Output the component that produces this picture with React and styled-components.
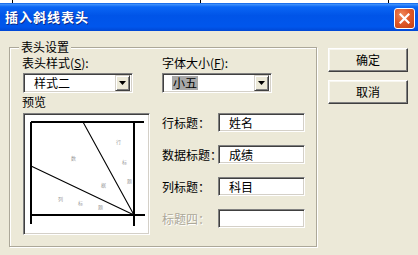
import styled, {createGlobalStyle} from "styled-components";

const GlobalStyle = createGlobalStyle`
    html, body {
        margin: 0;
        padding: 0;
        background: #ece9d8;
    }
    body {
        font-family: "Noto Sans CJK SC", "Liberation Sans", sans-serif;
        font-size: 12px;
        color: #000;
    }
`;

const Window = styled.div`
    width: 418px;
    height: 255px;
    display: flex;
    flex-direction: column;
    background: #ece9d8;
    overflow: hidden;
`;

// strip of the sheet behind the dialog
const Backdrop = styled.div`
    height: 3px;
    background: #fff;
    display: flex;
    flex-shrink: 0;
`;
const BackdropCell = styled.div`
    width: ${({$w}) => $w}px;
    flex-shrink: 0;
    border-right: 1px solid #000;
`;

const TitleBar = styled.div`
    height: 28px;
    flex-shrink: 0;
    display: flex;
    align-items: center;
    justify-content: space-between;
    padding: 0 3px 0 5px;
    background: linear-gradient(180deg, #0a5fe6 0%, #3d8ffb 5%, #0a66f5 14%, #0054e8 45%, #0056ec 85%, #0047d4 100%);
`;
const Title = styled.div`
    color: #fff;
    font-weight: bold;
    font-size: 13px;
    letter-spacing: 1px;
    line-height: 16px;
    text-shadow: 1px 1px 0 #0a2a8a;
`;
const CloseButton = styled.div`
    width: 21px;
    height: 21px;
    box-sizing: border-box;
    margin-top: 2px;
    border: 1px solid #fff;
    border-radius: 3px;
    background: radial-gradient(circle at 35% 30%, #f08a5c 0%, #e0592a 45%, #c4400f 100%);
    display: flex;
    align-items: center;
    justify-content: center;
`;

const Body = styled.div`
    flex: 1;
    display: flex;
    align-items: flex-start;
    gap: 11px;
    padding: 9px 0 0 9px;
`;

const Group = styled.fieldset`
    margin: 0;
    padding: 0;
    width: 308px;
    height: 207px;
    box-sizing: border-box;
    border: 1px solid #aca899;
    box-shadow: 1px 1px 0 #fff, inset 1px 1px 0 #fff;
`;
const Legend = styled.legend`
    margin-left: 9px;
    padding: 0 2px;
    line-height: 14px;
    background: #ece9d8;
`;
const GroupContent = styled.div`
    padding: 2px 0 0 12px;
`;

const TopRow = styled.div`
    display: grid;
    grid-template-columns: 140px 110px;
`;
const Field = styled.div`
    display: flex;
    flex-direction: column;
    gap: 3px;
`;
const Label = styled.div`
    line-height: 14px;
    white-space: nowrap;
    color: ${({$disabled}) => ($disabled ? "#aca899" : "#000")};
    text-shadow: ${({$disabled}) => ($disabled ? "1px 1px 0 #fff" : "none")};
    u {
        text-decoration: underline;
    }
`;

const Sunken = styled.div`
    box-sizing: border-box;
    background: #fff;
    border: 1px solid;
    border-color: #808080 #fff #fff #808080;
    box-shadow: inset 1px 1px 0 #404040, inset -1px -1px 0 #d4d0c8;
`;

const Combo = styled(Sunken)`
    width: 110px;
    height: 20px;
    margin-left: ${({$shift}) => $shift}px;
    display: flex;
    align-items: center;
    padding: 0 2px 0 ${({$pad}) => $pad}px;
    line-height: 14px;
`;
const Selected = styled.span`
    background: #a8a8a8;
    padding: 0 1px;
`;
const DropButton = styled.div`
    margin-left: auto;
    width: 15px;
    height: 16px;
    box-sizing: border-box;
    background: #ece9d8;
    border: 1px solid;
    border-color: #d4d0c8 #404040 #404040 #d4d0c8;
    box-shadow: inset 1px 1px 0 #fff, inset -1px -1px 0 #808080;
    display: flex;
    align-items: center;
    justify-content: center;
`;

const PreviewLabel = styled(Label)`
    margin-top: 2px;
`;

const BottomRow = styled.div`
    display: flex;
    gap: 12px;
    margin-top: 4px;
`;
const Preview = styled(Sunken)`
    width: 127px;
    height: 122px;
    margin-left: 1px;
    svg {
        display: block;
    }
`;

const Fields = styled.div`
    display: flex;
    flex-direction: column;
    gap: 13px;
`;
const FieldRow = styled.div`
    display: flex;
    align-items: center;
    height: 19px;
`;
const FieldLabel = styled(Label)`
    width: 56px;
`;
const TextBox = styled(Sunken)`
    width: 87px;
    height: 19px;
    padding-left: 10px;
    line-height: 15px;
    display: flex;
    align-items: center;
`;

const Buttons = styled.div`
    display: flex;
    flex-direction: column;
    gap: 8px;
    margin-top: 8px;
`;
const Button = styled.div`
    width: 80px;
    height: 24px;
    box-sizing: border-box;
    background: #ece9d8;
    border: 1px solid;
    border-color: #fff #404040 #404040 #fff;
    box-shadow: inset -1px -1px 0 #808080, inset 1px 1px 0 #f8f7f0;
    display: flex;
    align-items: center;
    justify-content: center;
    line-height: 14px;
`;

const fields = [
    {label: "行标题：", value: "姓名"},
    {label: "数据标题：", value: "成绩"},
    {label: "列标题：", value: "科目"},
    {label: "标题四：", value: "", disabled: true},
];

// little grey captions in the preview
const marks = [
    ["行", 92, 30],
    ["标", 98, 50],
    ["题", 103, 69],
    ["数", 47, 46],
    ["据", 77, 73],
    ["列", 34, 87],
    ["标", 54, 91],
    ["题", 74, 95],
];

const Arrow = () => (
    <svg width="7" height="4" viewBox="0 0 7 4">
        <path d="M0 0h7L3.5 4z" fill="#000" />
    </svg>
);

const App = () => {
    return (
        <Window>
            <GlobalStyle />
            <Backdrop>
                <BackdropCell $w={12} />
                <BackdropCell $w={187} />
                <BackdropCell $w={187} />
            </Backdrop>
            <TitleBar>
                <Title>插入斜线表头</Title>
                <CloseButton>
                    <svg width="11" height="11" viewBox="0 0 11 11">
                        <path d="M1.5 1.5l8 8M9.5 1.5l-8 8" stroke="#fff" strokeWidth="2.2" strokeLinecap="square" />
                    </svg>
                </CloseButton>
            </TitleBar>
            <Body>
                <Group>
                    <Legend>表头设置</Legend>
                    <GroupContent>
                        <TopRow>
                            <Field>
                                <Label>
                                    表头样式(<u>S</u>):
                                </Label>
                                <Combo $shift={1} $pad={10}>
                                    样式二
                                    <DropButton>
                                        <Arrow />
                                    </DropButton>
                                </Combo>
                            </Field>
                            <Field>
                                <Label>
                                    字体大小(<u>F</u>):
                                </Label>
                                <Combo $shift={0} $pad={9}>
                                    <Selected>小五</Selected>
                                    <DropButton>
                                        <Arrow />
                                    </DropButton>
                                </Combo>
                            </Field>
                        </TopRow>
                        <PreviewLabel>预览</PreviewLabel>
                        <BottomRow>
                            <Preview>
                                <svg width="123" height="118" viewBox="0 0 123 118">
                                    <g stroke="#000" strokeWidth="2" fill="none">
                                        <path d="M7 8H120M7 8V110M110 8V112M7 101H121" />
                                    </g>
                                    <g stroke="#000" strokeWidth="1.1" fill="none">
                                        <path d="M59 8L110 101M7 52L110 101" />
                                    </g>
                                    {marks.map(([ch, x, y], i) => (
                                        <text key={i} x={x} y={y} fontSize="5" fill="#9a9a9a" fontFamily="Noto Sans CJK SC, sans-serif">
                                            {ch}
                                        </text>
                                    ))}
                                </svg>
                            </Preview>
                            <Fields>
                                {fields.map(f => (
                                    <FieldRow key={f.label}>
                                        <FieldLabel $disabled={f.disabled}>{f.label}</FieldLabel>
                                        <TextBox>{f.value}</TextBox>
                                    </FieldRow>
                                ))}
                            </Fields>
                        </BottomRow>
                    </GroupContent>
                </Group>
                <Buttons>
                    <Button>确定</Button>
                    <Button>取消</Button>
                </Buttons>
            </Body>
        </Window>
    );
};

export default App;
